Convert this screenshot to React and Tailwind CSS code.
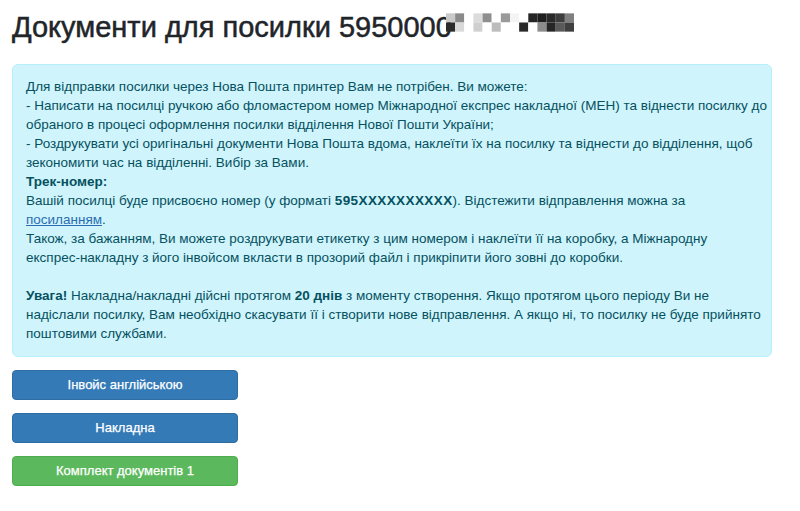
import React from 'react';

const mosaicTop = ['#c9c9c9', '#8a8a8a', '#ffffff', '#dcdcdc', '#8f8f8f', '#ffffff', '#9a9a9a', '#f4f4f4', '#ffffff', '#262626', '#1f1f1f', '#2a2a2a', '#3d3d3d', '#808080'];
const mosaicBottom = ['#2b2b2b', '#d8d8d8', '#ffffff', '#cfcfcf', '#ffffff', '#bcbcbc', '#ffffff', '#ffffff', '#2a2a2a', '#ffffff', '#8c8c8c', '#262626', '#5a5a5a', '#3f3f3f'];

function Mosaic() {
  return (
    <svg width="128" height="19" viewBox="0 0 126 18" className="inline-block -ml-[6px] align-[5px]">
      {mosaicTop.map((c, i) => (
        <rect key={'t' + i} x={i * 9} y="0" width="9" height="9" fill={c} />
      ))}
      {mosaicBottom.map((c, i) => (
        <rect key={'b' + i} x={i * 9} y="9" width="9" height="9" fill={c} />
      ))}
    </svg>
  );
}

export default function App() {
  return (
    <div className="min-h-screen bg-white px-3 pt-[10px] font-['Liberation_Sans','Noto_Sans',sans-serif]">
      <h1 className="text-[29px] font-medium leading-[35px] text-[#212529] whitespace-nowrap [-webkit-text-stroke:0.5px_#212529]">
        Документи для посилки 5950000<Mosaic />
      </h1>

      {/* line breaks follow the original wrapping */}
      <div className="mt-[19px] w-[760px] whitespace-nowrap rounded-md border border-[#b6effb] bg-[#cff4fc] px-[13px] pt-[12px] pb-[13px] text-[13.5px] leading-[19px] text-[#055160]">
        Для відправки посилки через Нова Пошта принтер Вам не потрібен. Ви можете:
        <br />- Написати на посилці ручкою або фломастером номер Міжнародної експрес накладної (МЕН) та віднести посилку до
        <br />обраного в процесі оформлення посилки відділення Нової Пошти України;
        <br />- Роздрукувати усі оригінальні документи Нова Пошта вдома, наклеїти їх на посилку та віднести до відділення, щоб
        <br />зекономити час на відділенні. Вибір за Вами.
        <br />
        <b className="font-bold">Трек-номер:</b>
        <br />Вашій посилці буде присвоєно номер (у форматі <b className="font-bold tracking-[0.4px]">595XXXXXXXXXX</b>). Відстежити відправлення можна за
        <br />
        <a href="#" className="text-[#2a6db0] underline">посиланням</a>.
        <br />Також, за бажанням, Ви можете роздрукувати етикетку з цим номером і наклеїти її на коробку, а Міжнародну
        <br />експрес-накладну з його інвойсом вкласти в прозорий файл і прикріпити його зовні до коробки.
        <br />
        <br />
        <b className="font-bold">Увага!</b> Накладна/накладні дійсні протягом <b className="font-bold">20 днів</b> з моменту створення. Якщо протягом цього періоду Ви не
        <br />надіслали посилку, Вам необхідно скасувати її і створити нове відправлення. А якщо ні, то посилку не буде прийнято
        <br />поштовими службами.
      </div>

      <div className="mt-[13px] flex w-[226px] flex-col gap-[13px]">
        <button className="h-[30px] rounded border border-[#2e6da4] bg-[#337ab7] text-[13px] font-medium text-white [-webkit-text-stroke:0.25px_white]">
          Інвойс англійською
        </button>
        <button className="h-[30px] rounded border border-[#2e6da4] bg-[#337ab7] text-[13px] font-medium text-white [-webkit-text-stroke:0.25px_white]">
          Накладна
        </button>
        <button className="h-[30px] rounded border border-[#4cae4c] bg-[#5cb85c] text-[13px] font-medium text-white [-webkit-text-stroke:0.25px_white]">
          Комплект документів 1
        </button>
      </div>
    </div>
  );
}
